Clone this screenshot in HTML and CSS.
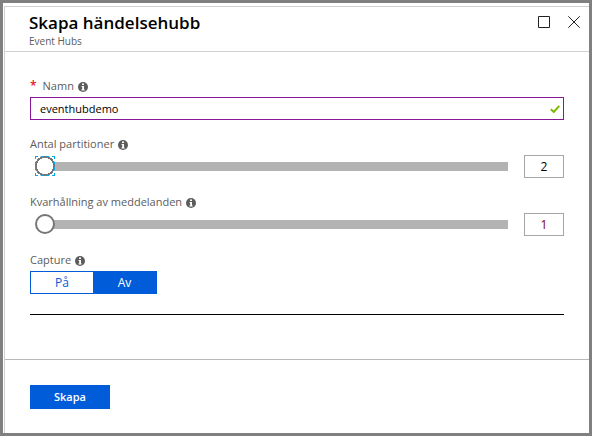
FILE: index.html
```html
<!DOCTYPE html>
<html lang="sv">
<head>
<meta charset="utf-8">
<meta name="viewport" content="width=device-width, initial-scale=1">
<title>Skapa händelsehubb</title>
<link rel="stylesheet" href="styles.css">
</head>
<body>
<svg class="defs" aria-hidden="true">
  <symbol id="info" viewBox="0 0 10 10">
    <circle cx="5" cy="5" r="5" fill="#5c5c5c"/>
    <path d="M4 1.5h2v1.4H4zM3.6 4H6v3.4h.7v1H3.4v-1h.8V4.9h-.6z" fill="#fff"/>
  </symbol>
</svg>
<main class="blade">
  <header class="head">
    <div>
      <h1 class="title">Skapa händelsehubb</h1>
      <p class="subtitle">Event Hubs</p>
    </div>
    <div class="actions">
      <button class="icon-button" type="button" aria-label="Maximera">
        <svg width="12" height="12" viewBox="0 0 12 12"><path d="M.5.5h11v11H.5z" fill="none" stroke="#222"/></svg>
      </button>
      <button class="icon-button" type="button" aria-label="Stäng">
        <svg width="12" height="12" viewBox="0 0 12 12"><path d="M.3.3l11.4 11.4M11.7.3L.3 11.7" fill="none" stroke="#222"/></svg>
      </button>
    </div>
  </header>
  <form class="form">
    <div class="fields">
      <div class="field">
        <div class="label-row"><span class="required">*</span><label for="name">Namn</label><svg class="info"><use href="#info"/></svg></div>
        <div class="name-box">
          <input class="name-input" id="name" type="text" value="eventhubdemo">
          <svg width="10" height="8" viewBox="0 0 10 8"><path d="M.8 4.2L3.8 7 9.3.8" fill="none" stroke="#7fba00" stroke-width="2"/></svg>
        </div>
      </div>
      <div class="field">
        <div class="label-row"><label for="partitions">Antal partitioner</label><svg class="info"><use href="#info"/></svg></div>
        <div class="slider-row">
          <input class="slider slider-focused" id="partitions" type="range" min="2" max="32" value="2">
          <input class="value" type="text" value="2" aria-label="Antal partitioner">
        </div>
      </div>
      <div class="field">
        <div class="label-row"><label for="retention">Kvarhållning av meddelanden</label><svg class="info"><use href="#info"/></svg></div>
        <div class="slider-row">
          <input class="slider" id="retention" type="range" min="1" max="7" value="1">
          <input class="value value-limit" type="text" value="1" aria-label="Kvarhållning av meddelanden">
        </div>
      </div>
      <div class="field">
        <div class="label-row"><span id="capture">Capture</span><svg class="info"><use href="#info"/></svg></div>
        <div class="toggle" role="group" aria-labelledby="capture">
          <button class="option" type="button" aria-pressed="false">På</button>
          <button class="option option-on" type="button" aria-pressed="true">Av</button>
        </div>
      </div>
    </div>
    <hr class="rule">
    <footer class="foot">
      <button class="create" type="button">Skapa</button>
    </footer>
  </form>
</main>
</body>
</html>
```
FILE: styles.css
```css
* {
  box-sizing: border-box;
}

body {
  margin: 0;
  min-height: 100vh;
  display: flex;
  padding: 3px;
  background: #808080;
  color: #000;
  font: 11px/16px "Open Sans", "Noto Sans", sans-serif;
}

button,
input {
  margin: 0;
  font: inherit;
}

.defs {
  position: absolute;
  width: 0;
  height: 0;
}

.blade {
  flex: 1;
  min-width: 0;
  display: flex;
  flex-direction: column;
  padding: 3px 0 0 1px;
  background: #fff;
}

.head {
  display: flex;
  justify-content: space-between;
  padding: 4px 9px 3px 24px;
  border: solid #d0d0d0;
  border-width: 1px 0 1px 1px;
}

.title {
  margin: 0;
  font-size: 17px;
  font-weight: 600;
  line-height: 24px;
}

.subtitle {
  margin: 0;
  color: #5c5c5c;
  font-size: 10px;
  line-height: 13px;
}

.actions {
  display: flex;
  align-items: flex-start;
  gap: 18px;
  padding-top: 5px;
}

.icon-button {
  display: flex;
  padding: 0;
  border: 0;
  background: none;
}

.form {
  flex: 1;
  display: flex;
  flex-direction: column;
  border-left: 1px solid #d0d0d0;
}

.fields {
  display: grid;
  gap: 15px;
  padding: 25px 25px 20px;
}

.label-row {
  display: flex;
  align-items: center;
  height: 20px;
  padding-bottom: 2px;
  color: #5c5c5c;
}

.required {
  margin-right: 6px;
  color: #e81123;
  font-size: 12px;
  font-weight: 600;
}

.info {
  width: 10px;
  height: 10px;
  margin: 2px 0 0 4px;
}

.name-box {
  display: flex;
  align-items: center;
  height: 23px;
  padding: 0 3px 0 9px;
  border: 1px solid #881798;
}

.name-input {
  flex: 1;
  min-width: 0;
  padding: 0;
  border: 0;
  outline: 0;
  background: none;
}

.slider-row {
  display: flex;
  align-items: flex-start;
  gap: 16px;
  padding-left: 5px;
}

.slider {
  flex: 1;
  min-width: 0;
  height: 20px;
  margin: 1px 0 0;
  appearance: none;
  background: linear-gradient(to right, transparent 10px, #b3b3b3 10px) 0 6px / 100% 9px no-repeat;
}

.slider::-webkit-slider-thumb {
  width: 20px;
  height: 20px;
  appearance: none;
  border: 2px solid #767676;
  border-radius: 50%;
  background: #fff;
}

.slider-focused::-webkit-slider-thumb {
  border: 1px dashed #00abec;
  border-radius: 0;
  background: radial-gradient(circle closest-side, #fff 8px, #767676 8px, #767676 10px, transparent 10px) border-box;
}

.value {
  width: 40px;
  height: 23px;
  padding: 0;
  border: 1px solid #a6a6a6;
  font-size: 12px;
  text-align: center;
}

.value-limit {
  color: #800000;
}

.toggle {
  display: grid;
  grid-template-columns: 62px 1fr;
  width: 127px;
  height: 23px;
  border: 1px solid #015cda;
}

.option {
  padding: 0;
  border: 0;
  background: #fff;
  color: #015cda;
  font-size: 12px;
}

.option-on {
  background: #015cda;
  color: #fff;
}

.rule {
  align-self: stretch;
  margin: 0 25px 44px;
  border: 0;
  border-top: 1px solid #000;
}

.foot {
  padding: 25px 25px 24px;
  border-top: 1px solid #b8b8b8;
}

.create {
  display: block;
  width: 80px;
  height: 24px;
  padding: 0;
  border: 0;
  background: #015cda;
  color: #fff;
  font-weight: 600;
}
```
